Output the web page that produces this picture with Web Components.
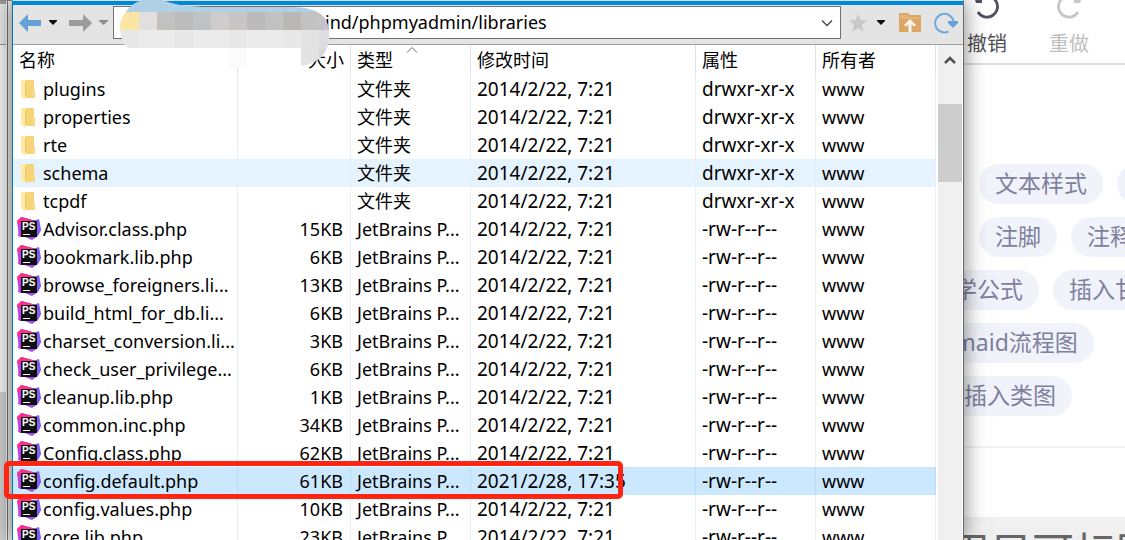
<!DOCTYPE html>
<html lang="zh-CN">
<head>
<meta charset="utf-8">
<title>libraries</title>
<style>
html,body{height:100%;margin:0}
body{font-family:"Noto Sans","Noto Sans CJK SC",sans-serif;font-size:18px;color:#000;background:#fff;overflow:hidden}
</style>
</head>
<body>
<desk-view></desk-view>
<script>
class Base extends HTMLElement{
  constructor(){super();this.attachShadow({mode:'open'});}
  paint(css,html){this.shadowRoot.innerHTML=`<style>*{box-sizing:border-box}${css}</style>${html}`;}
}

class DeskView extends Base{
  connectedCallback(){this.paint(`
    :host{display:grid;grid-template-columns:12px minmax(0,1fr) 161px;height:100vh;overflow:hidden}
  `,`<back-window></back-window><file-window></file-window><editor-panel></editor-panel>`);}
}

class BackWindow extends Base{
  connectedCallback(){this.paint(`
    :host{display:grid;grid-template-columns:6px 1px 1px 1fr;background:#e8e9e6;border-top:1px solid #8c8c8c}
    .pane{display:grid;grid-template-rows:43px 1px 347px 1fr;background:#f0f0f0}
    .bar{background:linear-gradient(#999 3px,#e4e4e4 3px)}
    .line{background:#909090}.thumb{background:#cdcdcd}
    .gap{background:#f4f4f4}.edge{background:#707070}
  `,`<div class="pane"><div class="bar"></div><div class="line"></div><div></div><div class="thumb"></div></div>
     <div class="gap"></div><div class="edge"></div>`);}
}

class PathBar extends Base{
  connectedCallback(){this.paint(`
    :host{display:grid;grid-template-columns:100px minmax(0,1fr) 122px;height:40px;background:#e4e4e4;border-bottom:1px solid #a0a0a0}
    button{border:0;background:none;padding:0;margin:0;display:flex;align-items:center}
    svg{display:block}
    .nav{display:flex;align-items:center;padding:0 0 4px 6px}
    .nav .a{margin-right:7px}.nav .b{margin-right:11px}
    .box{display:flex;height:33px;margin-top:1px;background:#fff;border:1px solid #707070}
    input{flex:1;min-width:0;border:0;outline:0;background:none;padding:0 0 2px 211px;font:inherit;line-height:24px}
    .box button{width:27px;justify-content:center}
    .tools{display:flex;align-items:center;padding:0 0 4px 7px}
    .tools .c{margin:0 7px 0 8px}.tools .d{margin:0 0 0 6px}.tools .r{margin-left:13px}
  `,`<div class="nav">
      <button class="a" aria-label="后退"><svg width="22" height="18"><path d="M0 9 9 0v6h13v6H9v6z" fill="#64a1d8"/></svg></button>
      <button class="b" aria-label="后退历史"><svg width="10" height="6"><path d="M1 0h8v1l-4 4-4-4z" fill="#111"/></svg></button>
      <button class="a" aria-label="前进"><svg width="23" height="18"><path d="M23 9 14 0v6H0v6h14v6z" fill="#9b9b9b"/></svg></button>
      <button aria-label="前进历史"><svg width="9" height="6"><path d="M0 0h9v1L4.500 5 0 1z" fill="#8e8e8e"/></svg></button>
     </div>
     <div class="box"><input aria-label="路径" value="ind/phpmyadmin/libraries"><button aria-label="展开"><svg width="12" height="8"><path d="M1 1.500 6 6.500 11 1.500" fill="none" stroke="#444" stroke-width="1.300"/></svg></button></div>
     <div class="tools">
      <button aria-label="收藏"><svg width="20" height="18" viewBox="0 0 20 18"><path d="M10 0l2.500 6 6.500.6-5 4.300 1.600 6.600L10 14l-5.600 3.500L6 10.900 1 6.600 7.500 6z" fill="#c9c9c9"/></svg></button>
      <button class="c" aria-label="收藏列表"><svg width="10" height="6"><path d="M1 0h8v1l-4 4-4-4z" fill="#111"/></svg></button>
      <button class="d" aria-label="上级目录"><svg width="22" height="19"><path d="M0 0h9l2 2h11v17H0z" fill="#dba763"/><path d="M1 2h8l1 2h11v2H1z" fill="#e3b77c"/><path d="M11 6l6 6-2 1.500-2.500-2V19h-3v-7.500L7 13.500 5 12z" fill="#f5f5f5"/></svg></button>
      <button class="r" aria-label="刷新"><svg width="25" height="22"><path d="M14.500 19.500A9.300 9.300 0 1 1 19.500 9" fill="none" stroke="#70aadc" stroke-width="2"/><path d="M14 9h10v2l-5 5-5-5z" fill="#64a1d8"/></svg></button>
     </div>`);}
}

class FileIcon extends Base{
  connectedCallback(){
    const dir=this.getAttribute('kind')==='dir';
    this.paint(`:host{display:block;width:24px;flex:none}svg{display:block}`,dir
    ?`<svg width="24" height="24"><path d="M8 3h9v18H8z" fill="#f6d479"/><path d="M15 13h3v8h-3z" fill="#f8d981"/><path d="M4 3h4l1 1v14l-1 5-4-4z" fill="#ffe9a5"/><path d="M8.500 5v14" stroke="#edc45f" stroke-width="1"/></svg>`
    :`<svg width="24" height="24" viewBox="0 0 24 24"><path d="M0 4 5 0l10 3 6 0 1 5 2 5-3 6-6 4-7-3-6-1z" fill="#a44af0"/><path d="M0 4 4 0l12 3-1 3L3 12z" fill="#ff2d8c"/><path d="M16 4l6-2 1 5 1 6-3 5-2 0z" fill="#7b61f5"/><path d="M1 8l3-2v14l-3-1 1-6z" fill="#c83de0"/><rect x="4" y="4" width="16" height="16" fill="#101010"/><text x="5" y="13" font-family="Liberation Sans" font-size="10" font-weight="700" fill="#fff">PS</text><path d="M6 17.500h7" stroke="#fff" stroke-width="1"/></svg>`);}
}

const rows=[['plugins'],['properties'],['rte'],['schema'],['tcpdf'],
['Advisor.class.php',15],['bookmark.lib.php',6],['browse_foreigners.li...',13],['build_html_for_db.li...',6],
['charset_conversion.li...',3],['check_user_privilege...',6],['cleanup.lib.php',1],['common.inc.php',34],
['Config.class.php',62],['config.default.php',61,'2021/2/28, 17:35'],['config.values.php',10],['core.lib.php',23]];

class FileList extends Base{
  connectedCallback(){this.paint(`
    :host{display:block;min-width:0}
    table{width:100%;table-layout:fixed;border-collapse:separate;border-spacing:0}
    th,td{height:28px;line-height:28px;padding:0 0 0 6px;text-align:left;font-weight:400;white-space:nowrap;border-right:1px solid #e6eff9}
    th{height:30px;border-color:#e2e2e2}
    .n{width:225px}.s{width:113px}.t{width:120px}.m{width:225px}.p{width:120px}
    th.s,td.s{text-align:right;padding:0 6px 0 0}
    td.s{padding-right:7px}
    td.n{padding:0 0 0 4px}
    td.m,td.p{font-size:19px}
    .f{display:flex;align-items:center;gap:2px}
    .hover td{background:#e5f3ff}
    .sel td{background:#cce8ff;border-color:#b9dcf8}
    th.t svg{position:absolute;left:55px;top:1px}
    th.t{position:relative}
  `,`<table><thead><tr><th class="n">名称</th><th class="s">大小</th><th class="t">类型<svg width="12" height="8"><path d="M1 6.500 6 1.500 11 6.500" fill="none" stroke="#666"/></svg></th><th class="m">修改时间</th><th class="p">属性</th><th>所有者</th></tr></thead><tbody>${
    rows.map(([n,k,d],i)=>`<tr class="${i===3?'hover':d?'sel':''}"><td class="n"><div class="f"><file-icon kind="${k?'php':'dir'}"></file-icon><span>${n}</span></div></td><td class="s">${k?k+'KB':''}</td><td class="t">${k?'JetBrains P...':'文件夹'}</td><td class="m">${d||'2014/2/22, 7:21'}</td><td class="p">${k?'-rw-r--r--':'drwxr-xr-x'}</td><td>www</td></tr>`).join('')
    }</tbody></table>`);}
}

class ScrollTrack extends Base{
  connectedCallback(){this.paint(`
    :host{display:flex;flex-direction:column;background:#f0f0f0}
    button{height:30px;border:0;padding:0;background:none;display:flex;justify-content:center;align-items:center}
    .thumb{height:78px;margin-top:29px;background:#cdcdcd}
  `,`<button aria-label="向上滚动"><svg width="14" height="10"><path d="M2 8 7 3 12 8" fill="none" stroke="#505050" stroke-width="2.500"/></svg></button><div class="thumb"></div>`);}
}

class PathMask extends Base{
  connectedCallback(){
    const c=['#fbe5a5','#e0dfde','#c2c2c0','#bcbcbc','#bfc3c6','#cfcdcb','#c7c6c4','#bbbbbc','#c2c2c2','#b9b8b4','#c2c2c2','#c4c4c8'];
    const x=i=>i?19+18*(i-1):0;
    const cell=(i,y,f)=>`<rect x="${x(i)}" y="${y}" width="${i?18:19}" height="18" fill="${f}"/>`;
    this.paint(`:host{display:block}svg{display:block}`,`<svg width="210" height="70"><defs><clipPath id="m"><path d="M0 24C3 12 12 3 22 0h20c12 4 20 6 40 7h90c14 0 24 3 30 8 6 6 8 14 7 24-1 12-8 22-20 25-6 2-11 2-12 2V48H8C3 44 0 36 0 24z"/></clipPath></defs>
    <g clip-path="url(#m)"><rect width="210" height="12" fill="#b0d0e6"/>${c.map((f,i)=>cell(i,12,f)).join('')}${c.map((f,i)=>cell(i,30,i===11?'#dedee0':i===10?'#e3e3e3':i%3?'#ebebeb':'#e8e8e8')).join('')}<rect x="181" y="48" width="18" height="18" fill="#e2e2e2"/><rect x="199" y="48" width="11" height="18" fill="#d8d8da"/></g><rect x="109" y="48" width="18" height="20" fill="#fcfcfc"/></svg>`);}
}

class MarkBox extends Base{
  connectedCallback(){this.paint(`:host{display:block;border:5px solid #ff2512;border-radius:5px;pointer-events:none;box-sizing:border-box}`,``);}
}

class FileWindow extends Base{
  connectedCallback(){this.paint(`
    :host{display:flex;flex-direction:column;position:relative;z-index:1;height:100vh;border-top:1px solid #d6e0e4;border-left:1px solid #0078c0;border-right:1px solid #6a6a6a;background:#fff;box-shadow:0 0 20px rgba(0,0,0,.5)}
    .title{flex:none;height:4px;background:#0088dc}
    .body{flex:1;min-height:0;overflow:hidden;display:grid;grid-template-columns:minmax(0,1fr) 24px;column-gap:2px;padding-right:1px}
    path-mask{position:absolute;left:107px;top:-1px}
    mark-box{position:absolute;left:-9px;top:460px;width:619px;height:38px}
  `,`<div class="title"></div><path-bar></path-bar><div class="body"><file-list></file-list><scroll-track></scroll-track></div><path-mask></path-mask><mark-box></mark-box>`);}
}

class TagPill extends Base{
  connectedCallback(){this.paint(`:host{display:block;flex:none}button{display:block;height:40px;min-width:40px;border:0;border-radius:20px;background:#f0f3f9;color:#7f80a0;font:inherit;font-size:23px;line-height:36px;padding:0 16px 2px;white-space:nowrap}`,`<button><slot></slot></button>`);}
}

class ToolButton extends Base{
  connectedCallback(){
    const redo=this.hasAttribute('redo'), ink=redo?'#c5c5ca':'#50505e';
    this.paint(`:host{display:block}button{display:flex;flex-direction:column;align-items:center;gap:11px;width:40px;border:0;padding:0;background:none;color:${redo?'#bfbfc2':'#505055'};font:inherit;font-size:20px;line-height:28px;white-space:nowrap}svg{display:block;${redo?'transform:scaleX(-1)':''}}`,
    `<button><svg width="26" height="19"><path d="M7-2A10.500 10.500 0 1 1 4 12" fill="none" stroke="${ink}" stroke-width="2.800"/><path d="M1 0h7v3H2z" fill="${ink}"/></svg><slot></slot></button>`);}
}

class EditorPanel extends Base{
  connectedCallback(){this.paint(`
    :host{display:flex;flex-direction:column;min-width:0;overflow:hidden;background:#fff}
    .tools{flex:none;display:flex;gap:42px;height:65px;padding-left:3px;border-bottom:2px solid #dedee0}
    .tags{flex:none;display:flex;flex-direction:column;gap:13px;height:383px;padding-top:99px;border-bottom:2px solid #f2f2f2}
    .row{display:flex;gap:14px;margin-left:var(--start)}
    footer{margin:69px 0 0 -16px;flex:none;height:120px;background:#f0f0f0;color:#666;font-size:42px;line-height:60px;white-space:nowrap;padding-top:5px}
  `,`<div class="tools"><tool-button>撤销</tool-button><tool-button redo>重做</tool-button></div>
     <div class="tags">
      <div class="row" style="--start:-39px"><tag-pill></tag-pill><tag-pill>文本样式</tag-pill><tag-pill></tag-pill></div>
      <div class="row" style="--start:-39px"><tag-pill></tag-pill><tag-pill>注脚</tag-pill><tag-pill>注释</tag-pill></div>
      <div class="row" style="--start:-49px"><tag-pill>数学公式</tag-pill><tag-pill>插入甘特图</tag-pill></div>
      <div class="row" style="--start:-69px"><tag-pill>Mermaid流程图</tag-pill></div>
      <div class="row" style="--start:-16px"><tag-pill>插入类图</tag-pill></div>
     </div>
     <footer>用目可标图</footer>`);}
}

for(const [n,c] of Object.entries({'file-icon':FileIcon,'path-bar':PathBar,'file-list':FileList,'scroll-track':ScrollTrack,'path-mask':PathMask,'mark-box':MarkBox,'back-window':BackWindow,'file-window':FileWindow,'tag-pill':TagPill,'tool-button':ToolButton,'editor-panel':EditorPanel,'desk-view':DeskView}))customElements.define(n,c);
</script>
</body>
</html>
